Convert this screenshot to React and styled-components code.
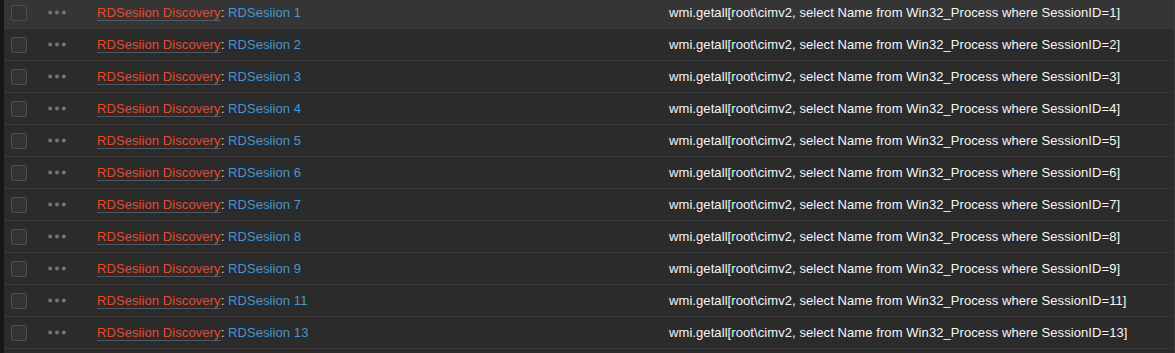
import React from "react";
import styled, { createGlobalStyle } from "styled-components";

const GlobalStyle = createGlobalStyle`
  html, body {
    margin: 0;
    padding: 0;
    background: #161616;
    overflow: hidden;
  }
  body {
    font-family: "Liberation Sans", Arial, sans-serif;
    font-size: 13px;
    color: #f2f2f2;
  }
`;

const Table = styled.div`
  margin: -3px 0 0 4px;
  background: #2b2b2b;
  border-right: 1px solid #3a3a3a;
  height: 360px;
`;

const Row = styled.div`
  display: flex;
  align-items: center;
  height: 32px;
  box-sizing: border-box;
  border-bottom: 1px solid #383838;
  background: ${(p) => (p.$hover ? "#353535" : "#2b2b2b")};
`;

const CheckCell = styled.div`
  width: 36px;
  padding-left: 7px;
  box-sizing: border-box;
  display: flex;
  align-items: center;
`;

const Checkbox = styled.span`
  display: block;
  width: 16px;
  height: 16px;
  box-sizing: border-box;
  border: 1px solid #4f4f4f;
  border-radius: 2px;
  background: #333333;
`;

const DotsCell = styled.div`
  width: 57px;
  padding-left: 8px;
  box-sizing: border-box;
  display: flex;
  align-items: center;
`;

const NameCell = styled.div`
  width: 572px;
  white-space: nowrap;
  letter-spacing: 0.08px;
`;

const RuleLink = styled.span`
  color: #e9472b;
  border-bottom: 1px solid #4e5961;
`;

const Sep = styled.span`
  color: #d8d8d8;
`;

const ItemLink = styled.span`
  color: #4796d4;
`;

const KeyCell = styled.div`
  flex: 1;
  white-space: nowrap;
  letter-spacing: 0.08px;
  color: #f6f6f6;
`;

const Dots = () => (
  <svg width="18" height="5" viewBox="0 0 18 5">
    <circle cx="2.2" cy="2.5" r="2" fill="#6b7883" />
    <circle cx="9" cy="2.5" r="2" fill="#6b7883" />
    <circle cx="15.8" cy="2.5" r="2" fill="#6b7883" />
  </svg>
);

const sessions = [1, 2, 3, 4, 5, 6, 7, 8, 9, 11, 13];

export default function App() {
  return (
    <>
      <GlobalStyle />
      <Table>
        {sessions.map((n, i) => (
          <Row key={n} $hover={i === 0}>
            <CheckCell>
              <Checkbox />
            </CheckCell>
            <DotsCell>
              <Dots />
            </DotsCell>
            <NameCell>
              <RuleLink>RDSesiion Discovery</RuleLink>
              <Sep>: </Sep>
              <ItemLink>RDSesiion {n}</ItemLink>
            </NameCell>
            <KeyCell>
              {`wmi.getall[root\\cimv2, select Name from Win32_Process where SessionID=${n}]`}
            </KeyCell>
          </Row>
        ))}
      </Table>
    </>
  );
}
